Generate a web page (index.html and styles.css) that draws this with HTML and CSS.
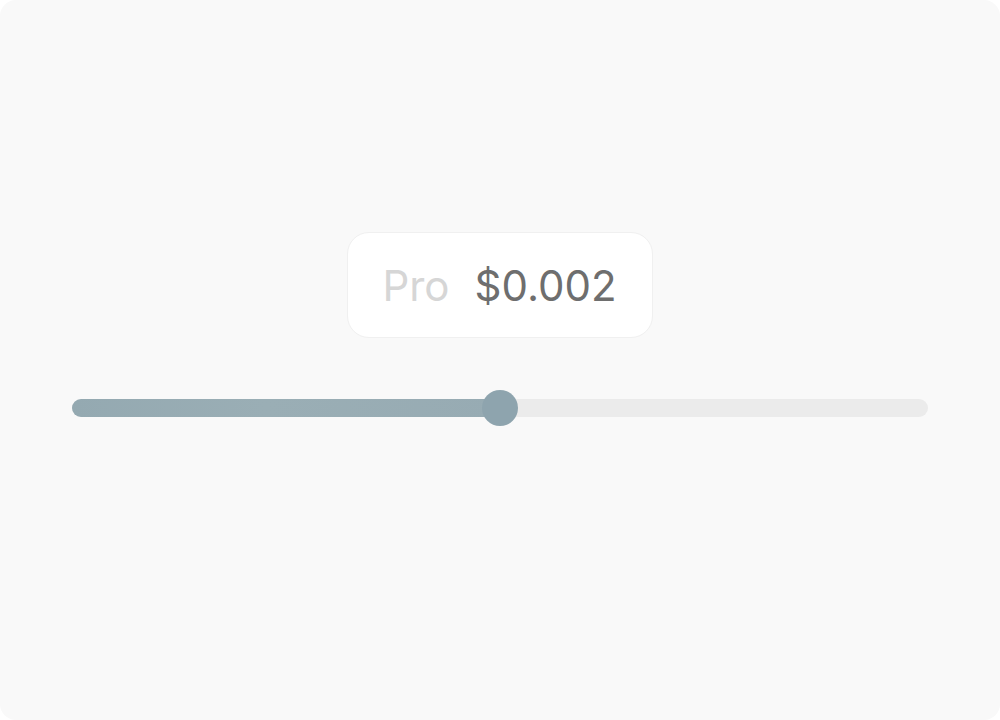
FILE: index.html
```html
<!DOCTYPE html>
<html lang="en">

<head>
    <meta charset="UTF-8">
    <meta name="viewport" content="width=device-width, initial-scale=1.0">
    <title>Pricing Slider</title>
    <link rel="stylesheet" href="styles.css">
</head>

<body>

    <div class="frame">
        <div class="price-card">
            <span class="plan">Pro</span>
            <span class="price">$0.002</span>
        </div>

        <div class="slider">
            <div class="track">
                <div class="fill" style="width: 50%"></div>
                <div class="thumb" style="left: 50%"></div>
            </div>
        </div>
    </div>

</body>

</html>
```

FILE: styles.css
```css
body {
    margin: 0;
    padding: 0;
    background-color: #fff;
    font-family: Inter, "Noto Sans", sans-serif;
}

.frame {
    height: 720px;
    border-radius: 16px;
    background-color: #f9f9f9;
    display: flex;
    flex-direction: column;
    align-items: center;
    padding-top: 232px;
    box-sizing: border-box;
}

.price-card {
    display: flex;
    align-items: center;
    gap: 25px;
    height: 106px;
    padding: 0 35px 0 34px;
    box-sizing: border-box;
    background-color: #fff;
    border: 1px solid #f0f0f0;
    border-radius: 22px;
    font-size: 42px;
}

.plan {
    color: #d6d6d6;
}

.price {
    color: #6e6e6e;
}

.slider {
    width: 856px;
    margin-top: 61px;
}

.track {
    position: relative;
    height: 18px;
    border-radius: 9px;
    background-color: #ebebeb;
}

.fill {
    height: 100%;
    border-radius: 9px 0 0 9px;
    background: linear-gradient(90deg, #94a9b1, #9aaeb5 45%, #97abb3);
}

.thumb {
    position: absolute;
    top: 50%;
    width: 36px;
    height: 36px;
    margin: -18px 0 0 -18px;
    border-radius: 50%;
    background-color: #8ea4ae;
}
```
